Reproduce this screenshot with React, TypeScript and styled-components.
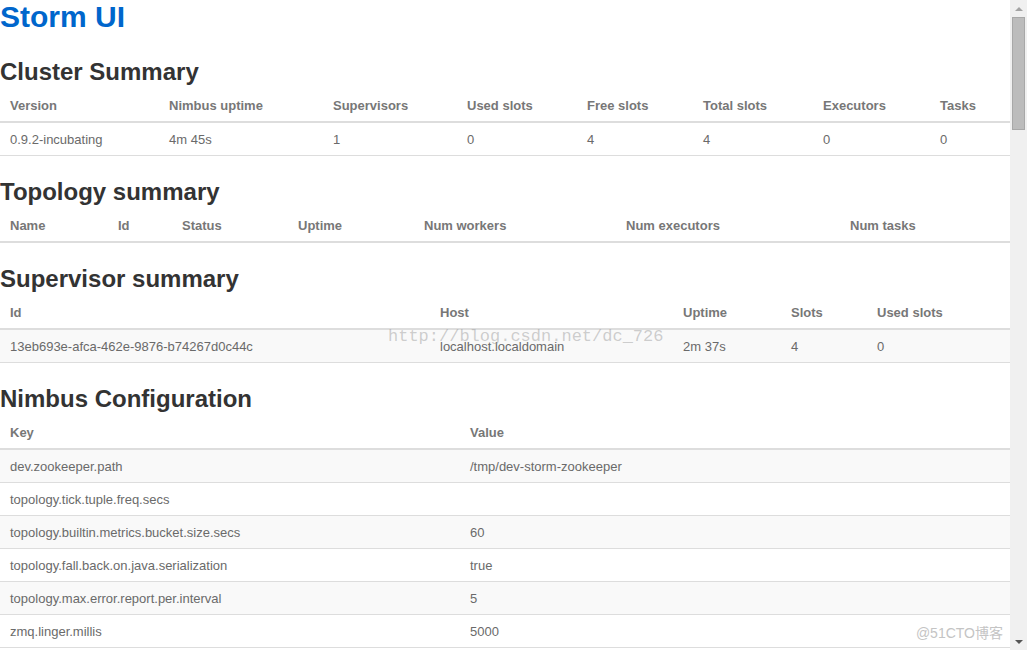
import styled, { createGlobalStyle } from "styled-components"

const GlobalStyle = createGlobalStyle`
  html, body {
    margin: 0;
    padding: 0;
    height: 100%;
    overflow: hidden;
    background: #fff;
  }
  body {
    font-family: "Liberation Sans", Arial, sans-serif;
  }
`

const Window = styled.div`
  display: flex;
  height: 650px;
  width: 100%;
  overflow: hidden;
  position: relative;
`
const Page = styled.div`
  flex: 1;
  min-width: 0;
  overflow: hidden;
  position: relative;
`
const Title = styled.h1`
  margin: 0;
  font-size: 30px;
  line-height: 33px;
  font-weight: bold;
  color: #0066cc;
`
const Heading = styled.h2<{ $top: number }>`
  margin: ${(p) => p.$top}px 0 3px;
  font-size: 24px;
  line-height: 28px;
  font-weight: bold;
  color: #333;
`
const Table = styled.table`
  width: 100%;
  border-collapse: collapse;
  table-layout: fixed;
  font-size: 13px;
`
const Th = styled.th`
  text-align: left;
  font-weight: bold;
  color: #777;
  padding: 7px 10px 5px;
  line-height: 20px;
  border-bottom: 2px solid #ddd;
  white-space: nowrap;
`
const Row = styled.tr<{ $shaded: boolean }>`
  background: ${(p) => (p.$shaded ? "#f9f9f9" : "#fff")};
`
const Td = styled.td`
  color: #6a6a6a;
  padding: 7px 10px 5px;
  line-height: 20px;
  border-bottom: 1px solid #ddd;
  white-space: nowrap;
`
const Scrollbar = styled.div`
  width: 17px;
  flex-shrink: 0;
  background: #f0f0f0;
  display: flex;
  flex-direction: column;
  align-items: center;
`
const Arrow = styled.div<{ $down?: boolean }>`
  height: 17px;
  width: 17px;
  display: flex;
  align-items: center;
  justify-content: center;
  &::after {
    content: "";
    border-left: 4px solid transparent;
    border-right: 4px solid transparent;
    ${(p) =>
      p.$down
        ? "border-top: 4px solid #555;"
        : "border-bottom: 4px solid #a3a3a3;"}
  }
`
const Thumb = styled.div`
  width: 11px;
  height: 111px;
  background: #bcbcbc;
  border: 1px solid #a8a8a8;
`
const Track = styled.div`
  flex: 1;
`
const Watermark = styled.div`
  position: absolute;
  left: 388px;
  top: 327px;
  font-family: "Liberation Mono", "Courier New", monospace;
  font-size: 17px;
  color: rgba(150, 150, 150, 0.45);
  pointer-events: none;
  white-space: nowrap;
`
const Badge = styled.div`
  position: absolute;
  right: 24px;
  bottom: 8px;
  font-family: "Liberation Sans", "Noto Sans CJK SC", sans-serif;
  font-size: 14px;
  color: #c4c4c4;
  white-space: nowrap;
`

type Section = {
  title: string
  top: number
  striped: boolean
  cols: { label: string; width: number }[]
  rows: string[][]
}

const sections: Section[] = [
  {
    title: "Cluster Summary",
    top: 25,
    striped: false,
    cols: [
      { label: "Version", width: 159 },
      { label: "Nimbus uptime", width: 164 },
      { label: "Supervisors", width: 134 },
      { label: "Used slots", width: 120 },
      { label: "Free slots", width: 116 },
      { label: "Total slots", width: 120 },
      { label: "Executors", width: 117 },
      { label: "Tasks", width: 80 },
    ],
    rows: [["0.9.2-incubating", "4m 45s", "1", "0", "4", "4", "0", "0"]],
  },
  {
    title: "Topology summary",
    top: 22,
    striped: true,
    cols: [
      { label: "Name", width: 108 },
      { label: "Id", width: 64 },
      { label: "Status", width: 116 },
      { label: "Uptime", width: 126 },
      { label: "Num workers", width: 202 },
      { label: "Num executors", width: 224 },
      { label: "Num tasks", width: 170 },
    ],
    rows: [],
  },
  {
    title: "Supervisor summary",
    top: 22,
    striped: true,
    cols: [
      { label: "Id", width: 430 },
      { label: "Host", width: 243 },
      { label: "Uptime", width: 108 },
      { label: "Slots", width: 86 },
      { label: "Used slots", width: 143 },
    ],
    rows: [["13eb693e-afca-462e-9876-b74267d0c44c", "localhost.localdomain", "2m 37s", "4", "0"]],
  },
  {
    title: "Nimbus Configuration",
    top: 22,
    striped: true,
    cols: [
      { label: "Key", width: 460 },
      { label: "Value", width: 550 },
    ],
    rows: [
      ["dev.zookeeper.path", "/tmp/dev-storm-zookeeper"],
      ["topology.tick.tuple.freq.secs", ""],
      ["topology.builtin.metrics.bucket.size.secs", "60"],
      ["topology.fall.back.on.java.serialization", "true"],
      ["topology.max.error.report.per.interval", "5"],
      ["zmq.linger.millis", "5000"],
    ],
  },
]

const App = () => {
  return (
    <>
      <GlobalStyle />
      <Window>
        <Page>
          <Title>Storm UI</Title>
          {sections.map((s) => (
            <div key={s.title}>
              <Heading $top={s.top}>{s.title}</Heading>
              <Table>
                <colgroup>
                  {s.cols.map((c) => (
                    <col key={c.label} style={{ width: c.width }} />
                  ))}
                </colgroup>
                <thead>
                  <tr>
                    {s.cols.map((c) => (
                      <Th key={c.label}>{c.label}</Th>
                    ))}
                  </tr>
                </thead>
                <tbody>
                  {s.rows.map((r, i) => (
                    <Row key={i} $shaded={s.striped && i % 2 === 0}>
                      {r.map((v, j) => (
                        <Td key={j}>{v}</Td>
                      ))}
                    </Row>
                  ))}
                </tbody>
              </Table>
            </div>
          ))}
          <Watermark>http://blog.csdn.net/dc_726</Watermark>
        </Page>
        <Scrollbar>
          <Arrow />
          <Thumb />
          <Track />
          <Arrow $down />
        </Scrollbar>
        <Badge>@51CTO博客</Badge>
      </Window>
    </>
  )
}

export default App
